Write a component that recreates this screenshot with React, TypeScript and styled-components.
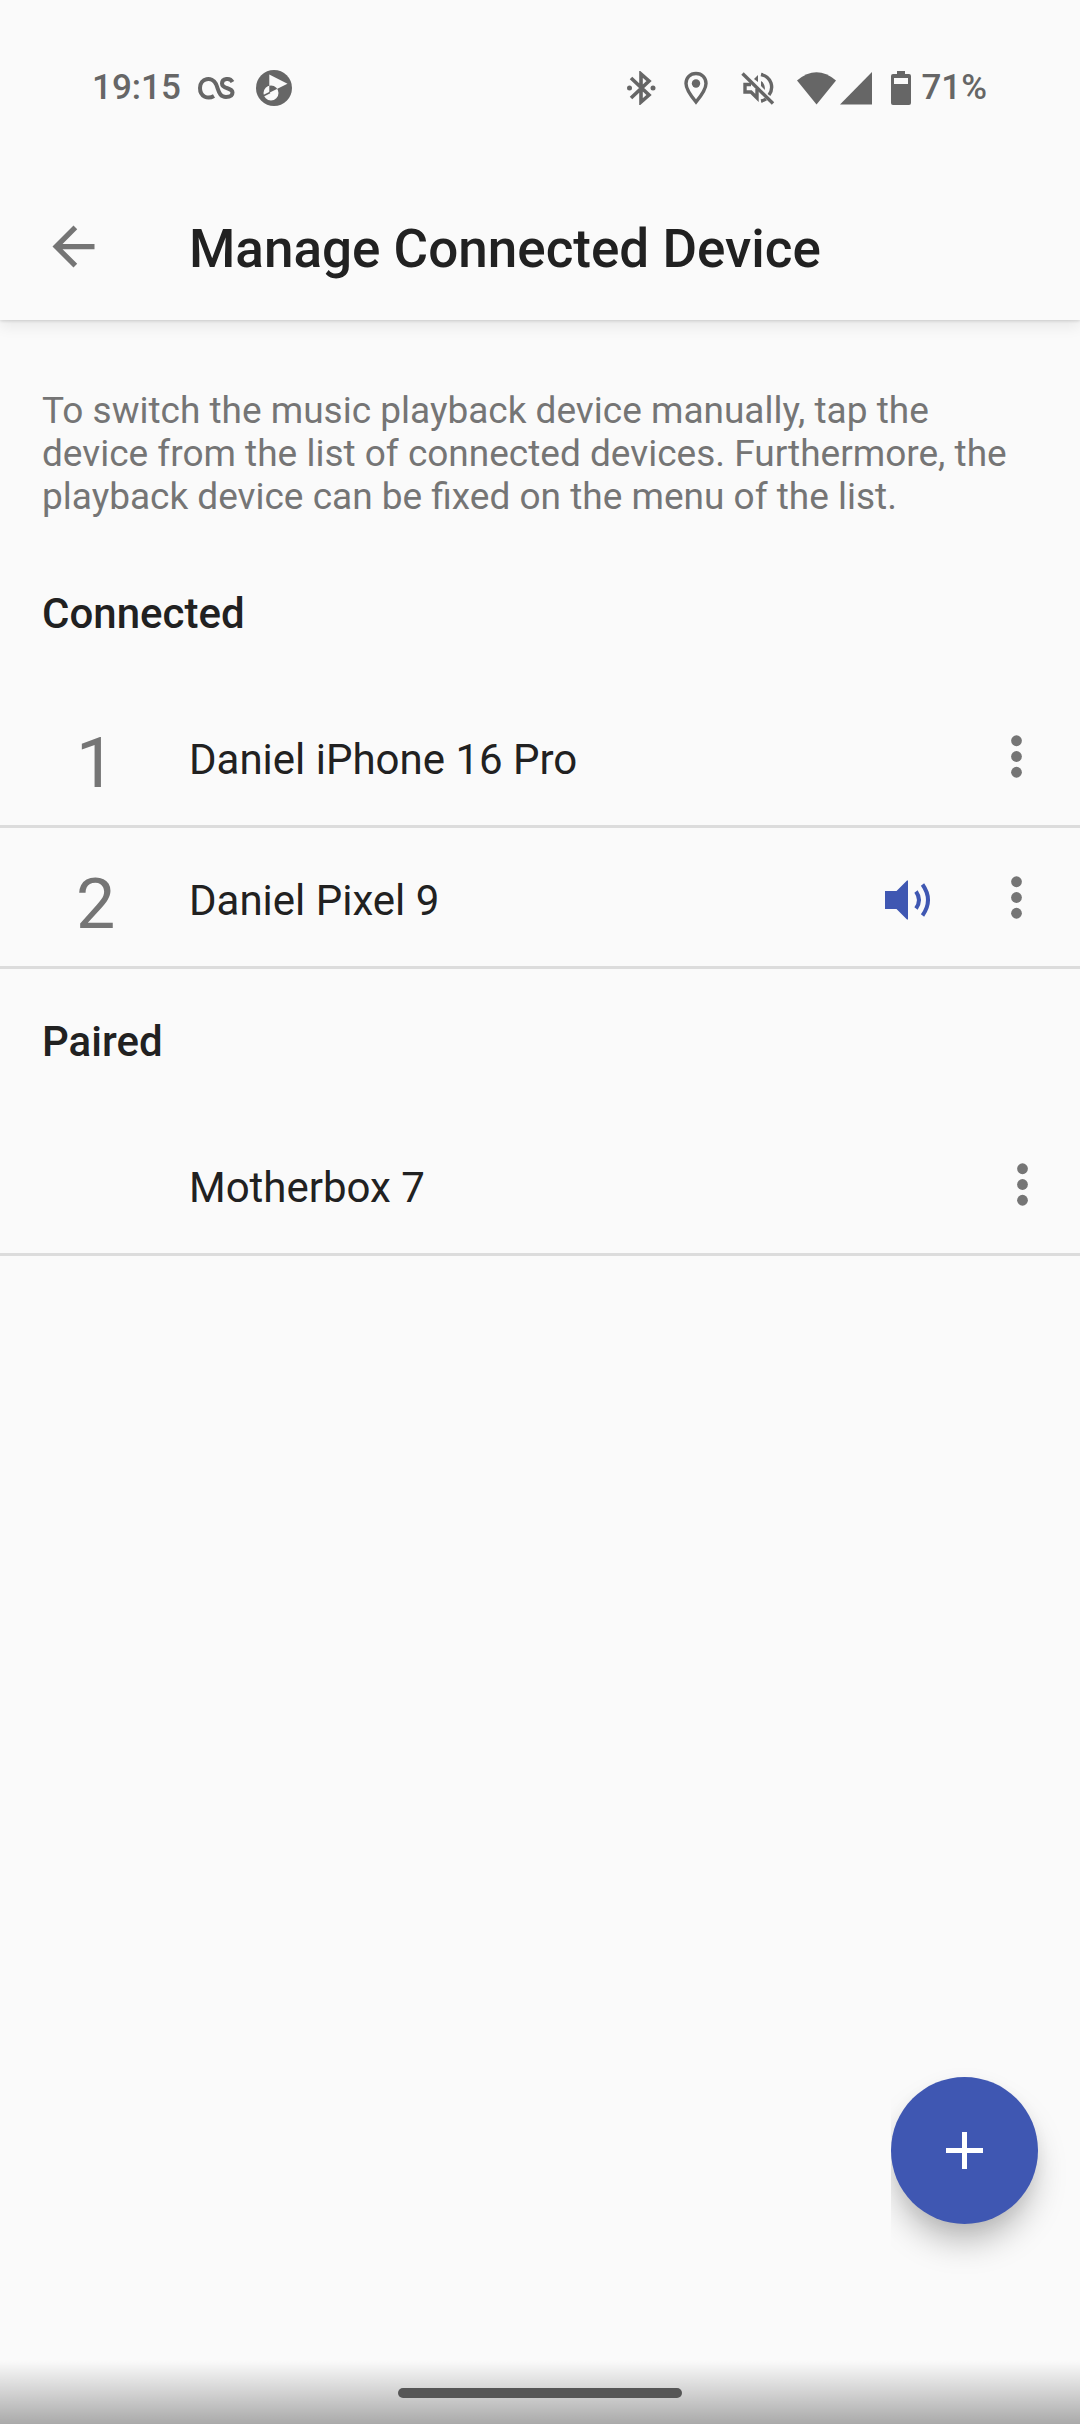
import React from "react";
import styled, { createGlobalStyle } from "styled-components";

const GlobalStyle = createGlobalStyle`
  * { box-sizing: border-box; }
  body { margin: 0; background: #fafafa; color: #212121; font-family: Roboto, sans-serif; }
  h1, h2, p, ul { margin: 0; padding: 0; font-weight: 400; }
  button { border: 0; padding: 0; background: none; font: inherit; cursor: pointer; }
  svg { display: block; flex: none; }
`;

const Screen = styled.div`
  min-height: 100vh;
  display: flex;
  flex-direction: column;
`;

const StatusBar = styled.div`
  height: 173px;
  padding: 3px 93px 0 92px;
  display: flex;
  align-items: center;
  justify-content: space-between;
  color: #666;
  font-size: 35px;
  font-weight: 500;
  line-height: 44px;
`;

const StatusGroup = styled.div`
  display: flex;
  align-items: center;
`;

const StatusIcon = styled.svg<{ $gap: number }>`
  margin-left: ${(p) => p.$gap}px;
`;

const StatusText = styled.span<{ $gap?: number }>`
  margin-left: ${(p) => p.$gap ?? 0}px;
`;

const AppBar = styled.header`
  height: 147px;
  padding: 0 42px;
  display: flex;
  align-items: center;
  gap: 84px;
  box-shadow: 0 1px 3px rgba(0, 0, 0, 0.14), 0 6px 14px rgba(0, 0, 0, 0.08);
  clip-path: inset(0 0 -30px 0);
`;

const BackButton = styled.button`
  color: #757575;
`;

const Title = styled.h1`
  padding-top: 5px;
  font-size: 53px;
  font-weight: 500;
  line-height: 62px;
`;

const Main = styled.main`
  flex: 1;
`;

const Intro = styled.p`
  padding: 69px 42px 23px;
  color: #757575;
  font-size: 37px;
  line-height: 43px;
`;

const SectionTitle = styled.h2`
  height: 146px;
  padding: 0 42px 2px;
  display: flex;
  align-items: center;
  font-size: 42px;
  font-weight: 500;
`;

const DeviceList = styled.ul`
  list-style: none;
`;

const DeviceRow = styled.li<{ $inset: number }>`
  height: 141px;
  padding-right: ${(p) => p.$inset}px;
  display: flex;
  align-items: center;
  border-bottom: 3px solid #dcdcdc;
`;

const Order = styled.span`
  width: 189px;
  padding: 14px 0 0 76px;
  color: #757575;
  font-size: 70px;
  line-height: 82px;
`;

const DeviceName = styled.span`
  flex: 1;
  padding-top: 8px;
  font-size: 42px;
  line-height: 50px;
`;

const Playing = styled.span`
  padding: 6px 54px 0 0;
  color: #3f57b2;
`;

const MenuButton = styled.button`
  color: #757575;
`;

const AddButton = styled.button`
  position: fixed;
  right: 42px;
  bottom: 200px;
  width: 147px;
  height: 147px;
  display: grid;
  place-items: center;
  border-radius: 50%;
  background: #3f57b2;
  color: #fff;
  box-shadow: 0 22px 34px -6px rgba(0, 0, 0, 0.28), 0 4px 20px rgba(0, 0, 0, 0.05);
  clip-path: inset(-20px -42px -60px 0);
`;

const NavBar = styled.footer`
  height: 63px;
  padding-top: 27px;
  display: flex;
  justify-content: center;
  background: linear-gradient(rgba(0, 0, 0, 0), rgba(0, 0, 0, 0.32));
`;

const Handle = styled.div`
  width: 284px;
  height: 10px;
  border-radius: 5px;
  background: #565656;
`;

type Device = { name: string; order?: number; playing?: boolean };

const connected: Device[] = [
  { name: "Daniel iPhone 16 Pro", order: 1 },
  { name: "Daniel Pixel 9", order: 2, playing: true },
];
const paired: Device[] = [{ name: "Motherbox 7" }];

function Devices({ items, inset }: { items: Device[]; inset: number }) {
  return (
    <DeviceList>
      {items.map((d) => (
        <DeviceRow key={d.name} $inset={inset}>
          <Order>{d.order}</Order>
          <DeviceName>{d.name}</DeviceName>
          {d.playing && (
            <Playing>
              <svg width="46" height="40" viewBox="0 0 46 40" role="img" aria-label="Playing">
                <path d="M0 11h11.500L22 .500h1v39h-1L11.500 29H0z" fill="currentColor" />
                <path d="M31 11.500Q37 20 31 28.500M37.500 4.500Q48.500 20 37.500 35.500" fill="none" stroke="currentColor" strokeWidth="4" />
              </svg>
            </Playing>
          )}
          <MenuButton aria-label={`Menu for ${d.name}`}>
            <svg width="63" height="63" viewBox="0 0 24 24" fill="currentColor">
              <circle cx="12" cy="6" r="2.050" />
              <circle cx="12" cy="12" r="2.050" />
              <circle cx="12" cy="18" r="2.050" />
            </svg>
          </MenuButton>
        </DeviceRow>
      ))}
    </DeviceList>
  );
}

export default function App() {
  return (
    <Screen>
      <GlobalStyle />
      <StatusBar>
        <StatusGroup>
          <StatusText>19:15</StatusText>
          <StatusIcon $gap={17} width="38" height="24" viewBox="0 0 38 24" fill="none" stroke="currentColor" strokeWidth="4">
            <path d="M16 20C10 23.500 2 21 2 12C2 2 14 0 18 8C21 15 21 21 28 21C33 21 34.500 19 34.500 16.500C34.500 11 24 13.500 24 7.500C24 2.500 32 1 34.500 6" />
          </StatusIcon>
          <StatusIcon $gap={20} width="36" height="36" viewBox="0 0 36 36">
            <circle cx="18" cy="18" r="18" fill="currentColor" />
            <path
              fillRule="evenodd"
              fill="#fafafa"
              d="M13.300 4.500L31.500 13.700L13.300 22.800zM7.500 23a7.500 7.500 0 1 0 15 0a7.500 7.500 0 1 0-15 0z"
            />
            <path d="M7 26L14 22.500" stroke="currentColor" strokeWidth="1.500" />
          </StatusIcon>
        </StatusGroup>
        <StatusGroup>
          <StatusIcon $gap={0} width="29" height="34" viewBox="0 0 29 34" fill="none" stroke="currentColor" strokeWidth="3.600">
            <path d="M4 7L22 24L14 31V3L22 10L4 27" />
            <circle cx="2.500" cy="17" r="2.500" fill="currentColor" stroke="none" />
            <circle cx="26" cy="17" r="2.500" fill="currentColor" stroke="none" />
          </StatusIcon>
          <StatusIcon $gap={28} width="24" height="34" viewBox="0 0 24 34">
            <path d="M12 2.500C6 2.500 2 7 2 12.500C2 19 12 31 12 31S22 19 22 12.500C22 7 18 2.500 12 2.500z" fill="none" stroke="currentColor" strokeWidth="3.400" />
            <circle cx="12" cy="12.500" r="4.200" fill="currentColor" />
          </StatusIcon>
          <StatusIcon $gap={33} width="34" height="34" viewBox="0 0 34 34" fill="none" stroke="currentColor" strokeWidth="3.400">
            <path d="M1.500 2.500L32 32.500" />
            <path d="M10 13.500H4V21H10L16 27V18" />
            <path d="M13 8L17 4V11zM20 10Q24 12 24 19L20 15z" fill="currentColor" stroke="none" />
            <path d="M20 3.500C31 6 33 17 28 24M25 28Q23 29.500 20 30" />
          </StatusIcon>
          <StatusIcon $gap={22} width="39" height="34" viewBox="0 0 39 34" fill="currentColor">
            <path d="M0 9.500Q19.500 -7 39 9.500L19.500 33.500z" />
          </StatusIcon>
          <StatusIcon $gap={4} width="32" height="34" viewBox="0 0 32 34" fill="currentColor">
            <path d="M32 1V33.500H0z" />
          </StatusIcon>
          <StatusIcon $gap={19} width="20" height="34" viewBox="0 0 20 34" fill="currentColor">
            <path fillRule="evenodd" d="M6 0h8v3h4a2 2 0 0 1 2 2v27a2 2 0 0 1-2 2H2a2 2 0 0 1-2-2V5a2 2 0 0 1 2-2h4zM3 7v6h14V7z" />
          </StatusIcon>
          <StatusText $gap={10}>71%</StatusText>
        </StatusGroup>
      </StatusBar>
      <AppBar>
        <BackButton aria-label="Back">
          <svg width="63" height="63" viewBox="0 0 24 24" fill="currentColor">
            <path d="M20 11H7.830l5.590-5.590L12 4l-8 8 8 8 1.410-1.410L7.830 13H20z" />
          </svg>
        </BackButton>
        <Title>Manage Connected Device</Title>
      </AppBar>
      <Main>
        <Intro>
          To switch the music playback device manually, tap the device from the list of connected devices.
          Furthermore, the playback device can be fixed on the menu of the list.
        </Intro>
        <SectionTitle>Connected</SectionTitle>
        <Devices items={connected} inset={32} />
        <SectionTitle>Paired</SectionTitle>
        <Devices items={paired} inset={26} />
      </Main>
      <AddButton aria-label="Add device">
        <svg width="37" height="37" viewBox="0 0 37 37" stroke="currentColor" strokeWidth="5">
          <path d="M18.500 0V37M0 18.500H37" />
        </svg>
      </AddButton>
      <NavBar>
        <Handle />
      </NavBar>
    </Screen>
  );
}
